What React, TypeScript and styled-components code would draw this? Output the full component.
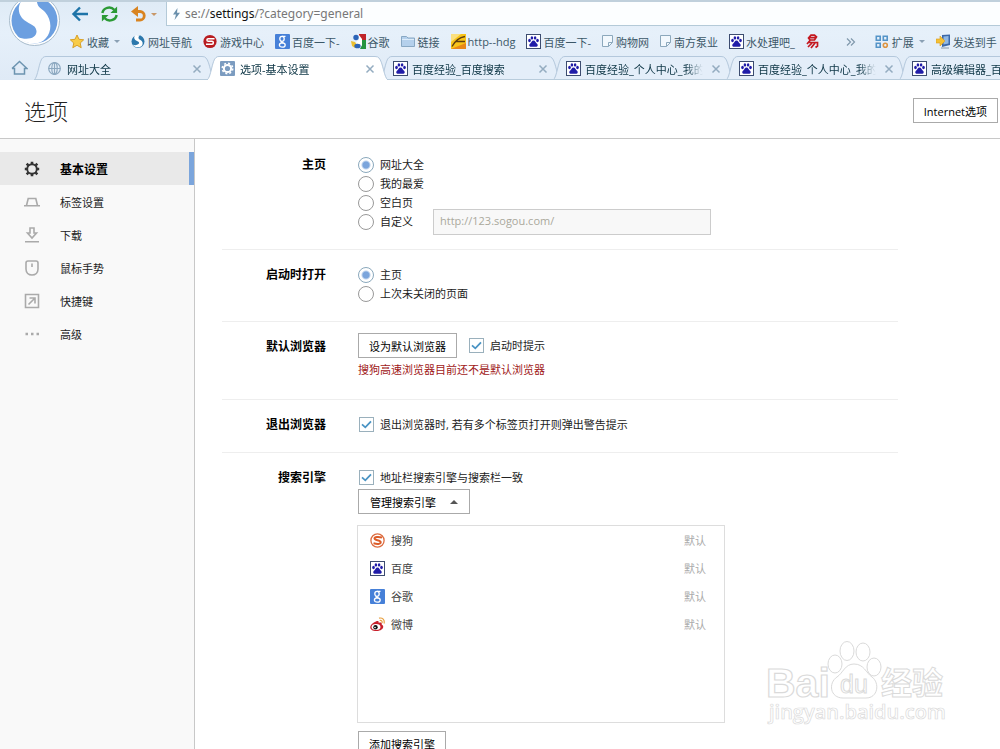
import React from "react";
import styled, { createGlobalStyle, css } from "styled-components";

const GlobalStyle = createGlobalStyle`
  * { box-sizing: border-box; }
  body {
    margin: 0;
    font-family: "Open Sans", "Noto Sans CJK SC", sans-serif;
    font-size: 11px;
    color: #222;
    background: #fff;
  }
  button, input { font: inherit; color: inherit; }
  svg { display: block; flex: none; }
`;

const blue = "#7ba5dc";

/* ---------- shell ---------- */

const Shell = styled.div`
  position: relative;
  display: flex;
  flex-direction: column;
  height: 100vh;
  overflow: hidden;
`;

const BrowserChrome = styled.header`
  flex: none;
  background: linear-gradient(#dfebf6, #e6f0fa 40%, #dfeaf6);
  border-top: 2px solid #c0d0dc;
`;

const ChromeTop = styled.div`
  display: flex;
`;

const LogoSlot = styled.a`
  display: block;
  width: 67px;
  height: 54px;
  flex: none;
  overflow: hidden;
`;

const Bars = styled.div`
  flex: 1;
  min-width: 0;
`;

const AddressBar = styled.div`
  display: flex;
  height: 24px;
`;

const NavButtons = styled.div`
  display: flex;
  align-items: center;
  width: 99px;
  flex: none;
  gap: 11px;
  padding-left: 4px;
`;

const PlainButton = styled.button`
  display: flex;
  align-items: center;
  gap: 4px;
  padding: 0;
  border: 0;
  background: none;
  cursor: pointer;
`;

const UrlField = styled.div`
  display: flex;
  align-items: center;
  flex: 1;
  gap: 4px;
  padding-left: 5px;
  background: #fcfeff;
  border: solid #b4cad8;
  border-width: 0 0 1px 1px;
  font-family: "Noto Sans", "Noto Sans CJK SC", sans-serif;
  font-size: 12px;
  color: #777;

  b { font-weight: 400; color: #111; }
`;

const Bookmarks = styled.nav`
  display: flex;
  align-items: center;
  height: 30px;
  gap: 11px;
  padding: 1px 0 0 3px;
  white-space: nowrap;
  overflow: hidden;
`;

const Bookmark = styled.a`
  display: flex;
  align-items: center;
  flex: none;
  gap: 2px;
  color: #3c5868;
  text-decoration: none;
`;

const Caret = styled.i<{ $up?: boolean; $color?: string }>`
  width: 0;
  height: 0;
  border: solid transparent;
  border-width: ${(p) => (p.$up ? "0 4px 4px" : "3px 3px 0")};
  border-${(p) => (p.$up ? "bottom" : "top")}-color: ${(p) => p.$color ?? "#8aa0b4"};
`;

const BookmarkCaret = styled(Caret)`
  margin-left: 3px;
`;

const MoreButton = styled(PlainButton)`
  flex: none;
  margin: 0 8px 0 16px;
`;

/* ---------- tab strip ---------- */

const TabStrip = styled.div`
  display: flex;
  height: 24px;
  overflow: hidden;
`;

const HomeButton = styled(PlainButton)`
  justify-content: center;
  width: 39px;
  flex: none;
`;

const Tab = styled.div<{ $active?: boolean }>`
  position: relative;
  z-index: ${(p) => (p.$active ? 1 : 0)};
  display: flex;
  align-items: center;
  width: 173px;
  flex: none;
  padding: 1px 10px 0 8px;
`;

const TabShape = styled.svg`
  position: absolute;
  left: -5px;
  top: 0;
  z-index: -1;
`;

const TabLabel = styled.button`
  display: flex;
  align-items: center;
  flex: 1;
  min-width: 0;
  gap: 4px;
  padding: 0;
  border: 0;
  background: none;
  color: #0c3444;
  text-align: left;
`;

const TabTitle = styled.span`
  flex: 1;
  overflow: hidden;
  white-space: nowrap;
  mask-image: linear-gradient(90deg, #000 85%, transparent);
`;

const CloseButton = styled(PlainButton)`
  margin-left: 8px;
`;

/* ---------- settings page ---------- */

const PageHeader = styled.div`
  display: flex;
  align-items: center;
  justify-content: space-between;
  flex: none;
  height: 59px;
  padding: 3px 2px 0 24px;
  border-bottom: 1px solid #c8c8c8;
`;

const PageTitle = styled.h1`
  margin: 0;
  font-size: 22px;
  line-height: 32px;
  font-weight: 300;
  color: #222;
`;

const PushButton = styled.button<{ $pad?: number }>`
  display: inline-flex;
  align-items: center;
  gap: 14px;
  height: 25px;
  padding: 0 ${(p) => p.$pad ?? 10}px;
  border: 1px solid #aaa;
  background: #fff;
  color: #000;
  white-space: nowrap;
  cursor: pointer;
`;

const Body = styled.div`
  display: flex;
  flex: 1;
  min-height: 0;
`;

const Sidebar = styled.nav`
  width: 195px;
  flex: none;
  padding-top: 13px;
  background: #f9f9f9;
  border-right: 1px solid #c8c8c8;
`;

const SideItem = styled.a<{ $active?: boolean }>`
  display: flex;
  align-items: center;
  height: 33px;
  gap: 20px;
  padding: 1px 0 0 24px;
  color: #222;
  text-decoration: none;
  ${(p) =>
    p.$active &&
    css`
      background: #e9e9e9;
      border-right: 5px solid ${blue};
      font-size: 12px;
      font-weight: 700;
      color: #000;
    `}
`;

const Main = styled.main`
  flex: 1;
  min-width: 0;
  padding: 1px 102px 0 27px;
  overflow: hidden;
`;

const Section = styled.section`
  display: grid;
  grid-template-columns: 104px 1fr;
  column-gap: 32px;
  padding: 15px 0 18px;
  border-bottom: 1px solid #eee;

  &:last-child { border-bottom: 0; }
`;

const SectionTitle = styled.h2`
  margin: 0;
  font-size: 12px;
  line-height: 19px;
  font-weight: 700;
  text-align: right;
  color: #000;
`;

const Row = styled.div`
  display: flex;
  align-items: center;
  height: 19px;
`;

const ButtonRow = styled.div`
  display: flex;
  align-items: center;
  gap: 12px;
  margin-top: -4px;
`;

const Choice = styled.label`
  display: flex;
  align-items: center;
  gap: 6px;
  line-height: 19px;
`;

const Radio = styled.input.attrs({ type: "radio" })`
  appearance: none;
  width: 16px;
  height: 16px;
  margin: 0;
  border: 1px solid #999;
  border-radius: 50%;
  background: #fff;

  &:checked {
    border-color: #8aa8bc;
    background: radial-gradient(circle, ${blue} 3px, #fff 5px);
  }
`;

const CheckInput = styled.input.attrs({ type: "checkbox" })`
  appearance: none;
  width: 15px;
  height: 15px;
  margin: 0;
  border: 1px solid #9ab0bc;
  background: #fff;
`;

const CheckBox = styled.span`
  position: relative;
  display: flex;

  svg {
    position: absolute;
    inset: 0;
    display: none;
    pointer-events: none;
  }
  input:checked + svg { display: block; }
`;

const CheckRow = styled(Row)`
  padding-left: 1px;
`;

const HomeUrl = styled.input`
  width: 278px;
  height: 26px;
  margin: -4px 0 -4px 20px;
  padding: 0 6px 2px;
  border: 1px solid #ccc;
  background: #f8f8f8;
  color: #aaa89c;
`;

const Warning = styled.p`
  margin: 0;
  line-height: 23px;
  color: #a01818;
`;

const EngineList = styled.ul`
  width: 368px;
  height: 198px;
  margin: 11px 0 8px -1px;
  padding: 0 18px 0 12px;
  border: 1px solid #ddd;
  list-style: none;
`;

const Engine = styled.li`
  display: flex;
  align-items: center;
  height: 28px;
  gap: 6px;
  color: #444;
`;

const DefaultButton = styled(PlainButton)`
  margin-left: auto;
  color: #aaa;
`;

const ManageWrap = styled.div`
  display: flex;
  padding-top: 2px;
`;

const Watermark = styled.svg`
  position: absolute;
  right: 50px;
  bottom: 18px;
  z-index: 2;
  pointer-events: none;
`;

/* ---------- drawings ---------- */

const SogouLogo = () => (
  <svg width="67" height="54" viewBox="0 2 67 54">
    <circle cx="34.500" cy="20.500" r="25" fill="#fff" stroke="#a8bccc" />
    <circle cx="34.500" cy="20.500" r="23" fill="#6c9fe0" />
    <path
      d="M24 -2C18 3 17 12 22 18C27 24 36 24 36.500 31C37 38 28 41 17 37C26 45 40 46 46 38C52 31 52 20 45 12C41 8 36 7 37 -2Z"
      fill="#fff"
    />
  </svg>
);

const BackIcon = () => (
  <svg width="18" height="18" viewBox="0 0 18 18" fill="none" stroke="#1e74a8" strokeWidth="2.4">
    <path d="M17 9H3M9 2.500L2.500 9L9 15.500" />
  </svg>
);

const ReloadIcon = () => (
  <svg width="19" height="18" viewBox="0 0 20 18">
    <path d="M2.500 8A7.200 6.800 0 0 1 15 4.500M17.500 10A7.200 6.800 0 0 1 5 13.500" fill="none" stroke="#2b9a35" strokeWidth="2.600" />
    <path d="M18 1V8H11ZM2 17V10H9Z" fill="#2b9a35" />
  </svg>
);

const UndoIcon = () => (
  <svg width="17" height="18" viewBox="0 0 17 18">
    <path d="M3 6.500H10A4.200 4.200 0 0 1 10 15H6" fill="none" stroke="#d98420" strokeWidth="2.800" />
    <path d="M8 1V12L1 6.500Z" fill="#d98420" />
  </svg>
);

const BoltIcon = () => (
  <svg width="9" height="12" viewBox="0 0 9 12">
    <path d="M5.500 0L1 6.500H4L2.500 12L8 4.800H5Z" fill="#6a90ac" />
  </svg>
);

const MoreIcon = () => (
  <svg width="10" height="10" viewBox="0 0 10 10" fill="none" stroke="#8098ac" strokeWidth="1.200">
    <path d="M1 1.500L4.500 5L1 8.500M5 1.500L8.500 5L5 8.500" />
  </svg>
);

const Svg15 = ({ children }: { children: React.ReactNode }) => (
  <svg width="15" height="15" viewBox="0 0 15 15">{children}</svg>
);

const StarIcon = () => (
  <Svg15>
    <path d="M7 1L9 5.300L13.700 5.800L10.200 9L11.200 13.700L7 11.300L2.800 13.700L3.800 9L.3 5.800L5 5.300Z" fill="#f8cc48" stroke="#d8a028" />
  </Svg15>
);

const SogouSmall = () => (
  <Svg15>
    <circle cx="7" cy="7.500" r="6.500" fill="#2c78ac" />
    <path d="M4.500 1C2 3.500 3.500 6 6 7C8.500 8 8.500 9 7.500 10C6 11.300 3.500 11.500 1.500 10.500C4.500 14.500 10.500 14 11.500 10.500C12.500 7 9 6 8 5C7 4 7.500 2 9 1.200Z" fill="#fff" />
  </Svg15>
);

const GameIcon = () => (
  <Svg15>
    <circle cx="7" cy="7.500" r="6.600" fill="#b81c20" />
    <path d="M11.500 4.800H5.200C3.500 4.800 3.500 7.300 5.200 7.300H9C10.800 7.300 10.800 10.200 9 10.200H3" fill="none" stroke="#fff" strokeWidth="1.500" />
  </Svg15>
);

const GoogleG = () => (
  <Svg15>
    <rect width="15" height="15" rx="1" fill="#4680d8" />
    <g fill="none" stroke="#fff" strokeWidth="1.300">
      <ellipse cx="7" cy="4.800" rx="2.200" ry="2.500" />
      <ellipse cx="7.300" cy="11" rx="2.900" ry="2.200" />
      <path d="M7 2.300H10.500M6.500 7.300C5.500 8.200 6.500 8.600 8.500 9" />
    </g>
  </Svg15>
);

const GoogleOld = () => (
  <Svg15>
    <path d="M8 0H15V6H11L8 4Z" fill="#c02428" />
    <path d="M11 6H15V15H9L11 11Z" fill="#249440" />
    <path d="M0 7L4 8L6 11L4 14L1 12Z" fill="#ecc030" />
    <path d="M8 1L11 5V11L9 13L5 8L8 6Z" fill="#fff" />
    <circle cx="5" cy="3.500" r="2.700" fill="#2c64b8" />
    <ellipse cx="6.500" cy="12" rx="3.200" ry="2.300" fill="#2c64b8" />
  </Svg15>
);

const FolderIcon = () => (
  <Svg15>
    <path d="M.5 12.500V2.500H5.500L7 4H13.500V12.500Z" fill="#b4d0ec" stroke="#88a8c4" />
    <path d="M1 5.500H13" stroke="#dcecfa" />
  </Svg15>
);

const HdgIcon = () => (
  <Svg15>
    <rect width="15" height="15" fill="#f8c418" />
    <path d="M0 0H10L0 8Z" fill="#fbe080" />
    <path d="M0 15L15 9V15Z" fill="#e88818" />
    <path d="M1 12.500C4 7 8 3.500 14 2.500M5 7.500H14" stroke="#5c3c10" strokeWidth="1.400" fill="none" />
  </Svg15>
);

const BaiduIcon = () => (
  <Svg15>
    <rect x=".5" y=".5" width="14" height="14" fill="#fff" stroke="#3c4c70" />
    <g fill="#201ca8">
      <ellipse cx="3.500" cy="6.500" rx="1.300" ry="1.700" />
      <ellipse cx="5.900" cy="3.900" rx="1.300" ry="1.700" />
      <ellipse cx="9.100" cy="3.900" rx="1.300" ry="1.700" />
      <ellipse cx="11.500" cy="6.500" rx="1.300" ry="1.700" />
      <path d="M7.500 6.500C9.300 6.500 9.500 8.500 11 9.700C12.500 11 11.500 12.900 9.800 12.700H5.200C3.500 12.900 2.500 11 4 9.700C5.500 8.500 5.700 6.500 7.500 6.500Z" />
    </g>
  </Svg15>
);

const NoteIcon = () => (
  <svg width="12" height="15" viewBox="0 0 12 15">
    <path d="M.5 1.500H10.500V8.500L6.500 12.500H.5Z" fill="#f2f8fd" stroke="#8ca8bc" />
    <path d="M6.500 12.500V8.500H10.500" fill="none" stroke="#8ca8bc" />
  </svg>
);

const YiIcon = () => (
  <svg width="13" height="15" viewBox="0 0 13 15" fill="none" stroke="#c41820" strokeWidth="1.700">
    <path d="M5 1.200H8.500L10.500 3L8.500 6H4L2.500 4ZM3.500 3.600H10M4 6.500L1 10M2.500 8.500H11.500V12L9.500 13.500M6 9L2 13M9 9L5 14" />
  </svg>
);

const ExtensionIcon = () => (
  <Svg15>
    <g fill="none" strokeWidth="1.600">
      <path d="M1.300 2.300H5.200V6.200H1.300ZM1.300 9.300H5.200V13.200H1.300ZM8.300 2.300H12.200V6.200H8.300Z" stroke="#5494c8" />
      <circle cx="10.300" cy="11.200" r="2" stroke="#dc9440" />
    </g>
  </Svg15>
);

const SendIcon = () => (
  <Svg15>
    <path d="M6 1L14 .5V11L6 13Z" fill="#3c68a8" />
    <path d="M7.500 2.500L12.500 2V9.500L7.500 10.500Z" fill="#90b8e4" />
    <path d="M0 5H4V2L9 7L4 12V9H0Z" fill="#f4c034" stroke="#d89c20" strokeWidth=".6" />
    <path d="M5 14H13" stroke="#8898a8" />
  </Svg15>
);

const HomeIcon = () => (
  <svg width="17" height="16" viewBox="0 0 17 16" fill="none" stroke="#6c94b0" strokeWidth="1.500">
    <path d="M1 8.500L8.500 1.500L16 8.500H13.500V14H3.500V8.500H1" />
  </svg>
);

const GlobeIcon = () => (
  <svg width="16" height="15" viewBox="0 0 16 15" fill="none" stroke="#8ca8c0" strokeWidth="1.200">
    <circle cx="7.500" cy="7.500" r="5.800" />
    <ellipse cx="7.500" cy="7.500" rx="2.700" ry="5.800" />
    <path d="M1.700 7.500H13.300M7.500 1.700V13.300" />
  </svg>
);

const SettingsFavicon = () => (
  <svg width="16" height="15" viewBox="0 0 16 15">
    <rect width="15" height="15" rx="1" fill="#7c9cc0" />
    <circle cx="7.500" cy="7.500" r="3.600" fill="none" stroke="#fff" strokeWidth="2" />
    <circle cx="7.500" cy="7.500" r="5.200" fill="none" stroke="#fff" strokeWidth="1.600" strokeDasharray="2 2.080" />
  </svg>
);

const CloseIcon = () => (
  <svg width="10" height="10" viewBox="0 0 10 10" stroke="#94acc0" strokeWidth="1.500">
    <path d="M1.500 1.500L8.500 8.500M8.500 1.500L1.500 8.500" />
  </svg>
);

const SideSvg = ({ children, dark }: { children: React.ReactNode; dark?: boolean }) => (
  <svg width="16" height="16" viewBox="0 0 16 16" fill="none" stroke={dark ? "#333" : "#aaa"} strokeWidth="1.600">
    {children}
  </svg>
);

const GearIcon = () => (
  <SideSvg dark>
    <circle cx="8" cy="8" r="4.800" strokeWidth="1.900" />
    <path d="M8 .8V3M8 13V15.200M.8 8H3M13 8H15.200M2.700 2.700L4.300 4.300M11.700 11.700L13.300 13.300M13.300 2.700L11.700 4.300M4.300 11.700L2.700 13.300" strokeWidth="2.600" />
  </SideSvg>
);
const TabIcon = () => (
  <SideSvg>
    <path d="M0 11.700H16M2.500 11.500L4.200 4.500H11.800L13.500 11.500" />
  </SideSvg>
);
const DownloadIcon = () => (
  <SideSvg>
    <path d="M6 1H10V6H12.500L8 11L3.500 6H6ZM1 14.700H15" />
  </SideSvg>
);
const MouseIcon = () => (
  <SideSvg>
    <path d="M4 1H12Q14 1 14 3V9C14 12.500 11.500 15 8 15S2 12.500 2 9V3Q2 1 4 1ZM8 3.500V7" />
  </SideSvg>
);
const ShortcutIcon = () => (
  <SideSvg>
    <path d="M1.500 1.500H14.500V14.500H1.500ZM4.500 11.500L10.500 5.500M5.500 5H11V10.500" />
  </SideSvg>
);
const DotsIcon = () => (
  <SideSvg>
    <path d="M1.500 8H4M7 8H9.500M12.500 8H15" strokeWidth="2.400" />
  </SideSvg>
);

const CheckMark = () => (
  <svg width="15" height="15" viewBox="0 0 15 15" fill="none" stroke="#4a94c4" strokeWidth="1.800">
    <path d="M3 7.300L6.300 10.300L12 4.300" />
  </svg>
);

const SogouEngine = () => (
  <Svg15>
    <circle cx="7.500" cy="7.500" r="6.600" fill="#fff" stroke="#dc6c40" strokeWidth="1.300" />
    <path d="M12 4.500C8.500 3.600 4.500 3.800 4.500 5.600C4.500 7.700 10.700 6.900 10.700 9.300C10.700 11.400 7 11.200 3.500 10.300" fill="none" stroke="#dc5c28" strokeWidth="2" />
  </Svg15>
);

const WeiboIcon = () => (
  <Svg15>
    <path d="M6 4.500C8 3.500 9 4.300 8.600 5.800C11 5 12.300 5.700 11.600 7.500C15 9 13 14 6.500 14C1 14-1 11 1 8C2.500 6 4.500 5 6 4.500Z" fill="#c8202c" />
    <ellipse cx="6" cy="10" rx="4.500" ry="3" fill="#fff" />
    <circle cx="5.500" cy="10.300" r="2.200" fill="#111" />
    <circle cx="5" cy="10.500" r=".8" fill="#fff" />
    <path d="M9 1.200C12.500.3 15 3 14 6.500M9.700 3.500C11.500 3.100 12.500 4.200 12 6" fill="none" stroke="#e8a040" strokeWidth="1.200" />
  </Svg15>
);

/* ---------- pieces ---------- */

const bookmarks: { icon: React.ReactNode; label: string; caret?: boolean }[] = [
  { icon: <StarIcon />, label: "收藏", caret: true },
  { icon: <SogouSmall />, label: "网址导航" },
  { icon: <GameIcon />, label: "游戏中心" },
  { icon: <GoogleG />, label: "百度一下-" },
  { icon: <GoogleOld />, label: "谷歌" },
  { icon: <FolderIcon />, label: "链接" },
  { icon: <HdgIcon />, label: "http--hdg" },
  { icon: <BaiduIcon />, label: "百度一下-" },
  { icon: <NoteIcon />, label: "购物网" },
  { icon: <NoteIcon />, label: "南方泵业" },
  { icon: <BaiduIcon />, label: "水处理吧_" },
];

const tabs = [
  { icon: <GlobeIcon />, title: "网址大全" },
  { icon: <SettingsFavicon />, title: "选项-基本设置", active: true },
  { icon: <BaiduIcon />, title: "百度经验_百度搜索" },
  { icon: <BaiduIcon />, title: "百度经验_个人中心_我的" },
  { icon: <BaiduIcon />, title: "百度经验_个人中心_我的" },
  { icon: <BaiduIcon />, title: "高级编辑器_百" },
];

const sideItems = [
  { icon: <GearIcon />, label: "基本设置", active: true },
  { icon: <TabIcon />, label: "标签设置" },
  { icon: <DownloadIcon />, label: "下载" },
  { icon: <MouseIcon />, label: "鼠标手势" },
  { icon: <ShortcutIcon />, label: "快捷键" },
  { icon: <DotsIcon />, label: "高级" },
];

const engines = [
  { icon: <SogouEngine />, name: "搜狗" },
  { icon: <BaiduIcon />, name: "百度" },
  { icon: <GoogleG />, name: "谷歌" },
  { icon: <WeiboIcon />, name: "微博" },
];

const RadioRow = ({ name, label, checked, children }: { name: string; label: string; checked?: boolean; children?: React.ReactNode }) => (
  <Row>
    <Choice>
      <Radio name={name} defaultChecked={checked} />
      {label}
    </Choice>
    {children}
  </Row>
);

const CheckChoice = ({ label }: { label: string }) => (
  <Choice>
    <CheckBox>
      <CheckInput defaultChecked />
      <CheckMark />
    </CheckBox>
    {label}
  </Choice>
);

const BaiduWatermark = () => (
  <Watermark width="184" height="92" viewBox="0 0 184 92" fill="#fff" stroke="#dadada" aria-hidden="true">
    <text x="0" y="58" fontFamily="Liberation Sans" fontWeight="700" fontSize="41" strokeWidth="1.200">Bai</text>
    <ellipse cx="69" cy="25" rx="7" ry="9" />
    <ellipse cx="81" cy="12" rx="7" ry="9.500" />
    <ellipse cx="97" cy="13" rx="7" ry="9" />
    <ellipse cx="108" cy="28" rx="7" ry="9" />
    <path d="M88 25C98 25 100 34 106 38C114 44 112 59 100 59H77C64 59 62 44 71 38C77 34 79 25 88 25Z" />
    <text x="74" y="54" fontFamily="Liberation Sans" fontSize="25">du</text>
    <text x="115" y="55" fontFamily="Noto Sans CJK SC" fontWeight="700" fontSize="31">经验</text>
    <text x="3" y="80" fontFamily="Open Sans" fontWeight="600" fontSize="20" strokeWidth=".7">jingyan.baidu.com</text>
  </Watermark>
);

export default function App() {
  return (
    <Shell>
      <GlobalStyle />
      <BrowserChrome>
        <ChromeTop>
          <LogoSlot href="#" aria-label="搜狗">
            <SogouLogo />
          </LogoSlot>
          <Bars>
            <AddressBar>
              <NavButtons>
                <PlainButton aria-label="后退"><BackIcon /></PlainButton>
                <PlainButton aria-label="刷新"><ReloadIcon /></PlainButton>
                <PlainButton aria-label="恢复">
                  <UndoIcon />
                  <Caret $color="#c89868" />
                </PlainButton>
              </NavButtons>
              <UrlField>
                <BoltIcon />
                <span>se://<b>settings</b>/?category=general</span>
              </UrlField>
            </AddressBar>
            <Bookmarks>
              {bookmarks.map((b, i) => (
                <Bookmark key={i} href="#">
                  {b.icon}
                  <span>{b.label}</span>
                  {b.caret && <BookmarkCaret />}
                </Bookmark>
              ))}
              <Bookmark href="#" aria-label="网易"><YiIcon /></Bookmark>
              <MoreButton aria-label="更多"><MoreIcon /></MoreButton>
              <Bookmark href="#">
                <ExtensionIcon />
                <span>扩展</span>
                <BookmarkCaret />
              </Bookmark>
              <Bookmark href="#">
                <SendIcon />
                <span>发送到手</span>
              </Bookmark>
            </Bookmarks>
          </Bars>
        </ChromeTop>
        <TabStrip>
          <HomeButton aria-label="主页"><HomeIcon /></HomeButton>
          {tabs.map((t, i) => (
            <Tab key={i} $active={t.active}>
              <TabShape width="182" height="24" viewBox="0 0 182 24">
                <path
                  d="M0 24C4 22 5 4 9 1.500Q10 .5 12 .5H168Q171 .5 172 2C176 6 177 22 181 24"
                  fill={t.active ? "#fff" : "#e4eef9"}
                  stroke="#b4c8dc"
                />
                {!t.active && <path d="M0 23.500H181" stroke="#b8ccdc" />}
              </TabShape>
              <TabLabel>
                {t.icon}
                <TabTitle>{t.title}</TabTitle>
              </TabLabel>
              <CloseButton aria-label="关闭标签"><CloseIcon /></CloseButton>
            </Tab>
          ))}
        </TabStrip>
      </BrowserChrome>

      <PageHeader>
        <PageTitle>选项</PageTitle>
        <PushButton>Internet选项</PushButton>
      </PageHeader>

      <Body>
        <Sidebar>
          {sideItems.map((s) => (
            <SideItem key={s.label} href="#" $active={s.active}>
              {s.icon}
              {s.label}
            </SideItem>
          ))}
        </Sidebar>
        <Main>
          <Section>
            <SectionTitle>主页</SectionTitle>
            <div>
              <RadioRow name="home" label="网址大全" checked />
              <RadioRow name="home" label="我的最爱" />
              <RadioRow name="home" label="空白页" />
              <RadioRow name="home" label="自定义">
                <HomeUrl aria-label="自定义主页地址" defaultValue="http://123.sogou.com/" />
              </RadioRow>
            </div>
          </Section>
          <Section>
            <SectionTitle>启动时打开</SectionTitle>
            <div>
              <RadioRow name="startup" label="主页" checked />
              <RadioRow name="startup" label="上次未关闭的页面" />
            </div>
          </Section>
          <Section>
            <SectionTitle>默认浏览器</SectionTitle>
            <div>
              <ButtonRow>
                <PushButton>设为默认浏览器</PushButton>
                <CheckChoice label="启动时提示" />
              </ButtonRow>
              <Warning>搜狗高速浏览器目前还不是默认浏览器</Warning>
            </div>
          </Section>
          <Section>
            <SectionTitle>退出浏览器</SectionTitle>
            <CheckRow><CheckChoice label="退出浏览器时, 若有多个标签页打开则弹出警告提示" /></CheckRow>
          </Section>
          <Section>
            <SectionTitle>搜索引擎</SectionTitle>
            <div>
              <CheckRow><CheckChoice label="地址栏搜索引擎与搜索栏一致" /></CheckRow>
              <ManageWrap>
                <PushButton $pad={11} aria-expanded="true">
                  管理搜索引擎
                  <Caret $up $color="#555" />
                </PushButton>
              </ManageWrap>
              <EngineList>
                {engines.map((e) => (
                  <Engine key={e.name}>
                    {e.icon}
                    {e.name}
                    <DefaultButton>默认</DefaultButton>
                  </Engine>
                ))}
              </EngineList>
              <PushButton>添加搜索引擎</PushButton>
            </div>
          </Section>
        </Main>
      </Body>
      <BaiduWatermark />
    </Shell>
  );
}
